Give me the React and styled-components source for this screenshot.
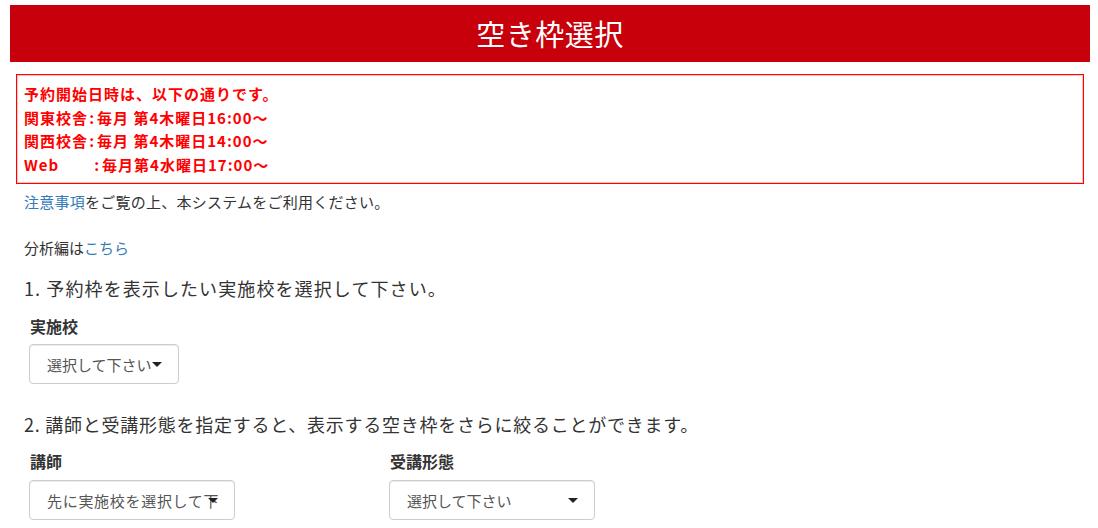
import React from "react";
import styled, { createGlobalStyle } from "styled-components";

const Global = createGlobalStyle`
  html, body { margin: 0; padding: 0; background: #fff; }
  body {
    font-family: "Noto Sans CJK JP", "Liberation Sans", sans-serif;
    color: #333;
    font-size: 15px;
  }
`;

const Page = styled.div`
  padding: 5px 8px 0 10px;
  width: 1080px;
`;

const Header = styled.header`
  background: #c7000b;
  height: 57px;
  display: flex;
  align-items: center;
  justify-content: center;
`;

const Title = styled.h1`
  margin: 0;
  color: #fff;
  font-size: 29px;
  font-weight: 400;
  letter-spacing: 0.5px;
  line-height: 1;
`;

const Notice = styled.div`
  margin: 12px 6px 0 6px;
  border: 1px solid #f00;
  box-shadow: inset 0 0 0 1px #ffc4c4;
  padding: 7px;
  height: 110px;
  box-sizing: border-box;
  color: #f00;
  font-weight: 700;
  font-size: 15px;
  line-height: 23.5px;
  letter-spacing: 1px;
`;

const NoticeLine = styled.div`
  white-space: pre;
`;

const Colon = styled.span`
  display: inline-block;
  width: ${(p) => p.$w}px;
  text-align: right;
  padding-right: 3px;
  letter-spacing: 0;
`;

const Content = styled.div`
  padding-left: 14px;
`;

const Para = styled.p`
  margin: ${(p) => p.$top || 0}px 0 0 0;
  line-height: 20px;
  font-size: 15px;
  letter-spacing: ${(p) => p.$ls || 0}px;
`;

const Link = styled.a`
  color: #337ab7;
  text-decoration: none;
`;

const Step = styled.h2`
  margin: ${(p) => p.$top}px 0 0 0;
  font-size: 18px;
  font-weight: 400;
  line-height: 24px;
  color: #333;
  letter-spacing: ${(p) => p.$ls}px;
`;

const Row = styled.div`
  display: grid;
  grid-template-columns: 360px 360px;
  margin: ${(p) => p.$top}px 0 0 5px;
`;

const Field = styled.div`
  display: flex;
  flex-direction: column;
  align-items: flex-start;
`;

const Label = styled.label`
  font-size: 16px;
  font-weight: 700;
  line-height: 22px;
  color: #333;
  margin-left: 1px;
`;

const SelectBox = styled.div`
  position: relative;
  margin-top: ${(p) => p.$gap}px;
  height: 40px;
  width: ${(p) => (p.$width ? `${p.$width}px` : "auto")};
  box-sizing: border-box;
  border: 1px solid #ccc;
  border-radius: 4px;
  box-shadow: inset 0 1px 1px rgba(0, 0, 0, 0.075);
  padding: 0 16px 0 17px;
  display: flex;
  align-items: center;
  overflow: hidden;
  background: #fff;
`;

const SelectText = styled.span`
  font-size: 15px;
  color: #555;
  white-space: nowrap;
  overflow: hidden;
  padding-right: ${(p) => (p.$auto ? 10 : 0)}px;
  letter-spacing: ${(p) => p.$ls || 0}px;
`;

const Arrow = styled.svg`
  position: absolute;
  right: 16px;
  top: 50%;
  margin-top: -2px;
  width: 10px;
  height: 5px;
`;

function Select({ text, width, gap, ls }) {
  return (
    <SelectBox $width={width} $gap={gap}>
      <SelectText $auto={!width} $ls={ls}>{text}</SelectText>
      <Arrow viewBox="0 0 10 5">
        <path d="M0 0 L10 0 L5 5 Z" fill="#222" />
      </Arrow>
    </SelectBox>
  );
}

export default function App() {
  return (
    <>
      <Global />
      <Page>
        <Header>
          <Title>空き枠選択</Title>
        </Header>
        <Notice>
          <NoticeLine>予約開始日時は、以下の通りです。</NoticeLine>
          <NoticeLine>関東校舎<Colon $w={6}>:</Colon>毎月 第4木曜日16:00～</NoticeLine>
          <NoticeLine>関西校舎<Colon $w={6}>:</Colon>毎月 第4木曜日14:00～</NoticeLine>
          <NoticeLine>Web<Colon $w={40}>:</Colon>毎月第4水曜日17:00～</NoticeLine>
        </Notice>
        <Content>
          <Para $top={8} $ls={0.25}>
            <Link href="#">注意事項</Link>をご覧の上、本システムをご利用ください。
          </Para>
          <Para $top={26}>
            分析編は<Link href="#">こちら</Link>
          </Para>
          <Step $top={18} $ls={1.1}>1. 予約枠を表示したい実施校を選択して下さい。</Step>
          <Row $top={15}>
            <Field>
              <Label>実施校</Label>
              <Select text="選択して下さい" gap={7} />
            </Field>
          </Row>
          <Step $top={28} $ls={0.75}>2. 講師と受講形態を指定すると、表示する空き枠をさらに絞ることができます。</Step>
          <Row $top={14}>
            <Field>
              <Label>講師</Label>
              <Select text="先に実施校を選択して下さい" width={206} gap={8} ls={0.7} />
            </Field>
            <Field>
              <Label>受講形態</Label>
              <Select text="選択して下さい" width={206} gap={8} />
            </Field>
          </Row>
        </Content>
      </Page>
    </>
  );
}
